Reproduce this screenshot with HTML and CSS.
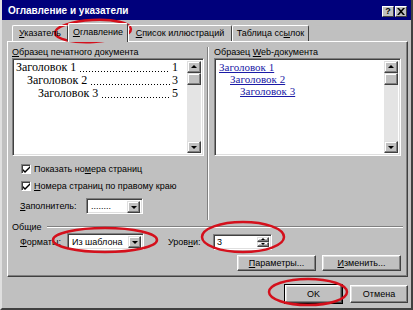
FILE: index.html
```html
<!DOCTYPE html>
<html>
<head>
    <meta charset="UTF-8">
    <title>Оглавление и указатели</title>
    <link rel="stylesheet" href="styles.css">
</head>
<body>

<div class="dialog">
    <div class="titlebar">
        <span class="title">Оглавление и указатели</span>
        <div class="title-buttons">
            <span class="tbtn">?</span>
            <span class="tbtn">
                <svg width="8" height="7" viewBox="0 0 8 7"><path d="M0 0h2l2 2.3L6 0h2L5 3.5 8 7H6L4 4.7 2 7H0l3-3.5z" fill="#000"/></svg>
            </span>
        </div>
    </div>

    <div class="tabs">
        <div class="tab tab-index"><u>У</u>казатель</div>
        <div class="tab tab-toc active"><u>О</u>главление</div>
        <div class="tab tab-figures"><u>С</u>писок иллюстраций</div>
        <div class="tab tab-links">Таблица сс<u>ы</u>лок</div>
    </div>

    <div class="panel">
        <div class="previews">
            <div class="col col-print">
                <div class="label"><u>О</u>бразец печатного документа</div>
                <div class="preview">
                    <div class="preview-body">
                        <div class="toc-line lvl1"><span class="name">Заголовок 1</span><span class="dots"></span><span class="num">1</span></div>
                        <div class="toc-line lvl2"><span class="name">Заголовок 2</span><span class="dots"></span><span class="num">3</span></div>
                        <div class="toc-line lvl3"><span class="name">Заголовок 3</span><span class="dots"></span><span class="num">5</span></div>
                    </div>
                    <div class="scrollbar">
                        <span class="sbtn up"></span>
                        <span class="thumb"></span>
                        <span class="track"></span>
                        <span class="sbtn down"></span>
                    </div>
                </div>
                <div class="check">
                    <span class="box"><svg width="7" height="7" viewBox="0 0 7 7"><path d="M0 3l2 2 5-5v2L2 7 0 5z" fill="#000"/></svg></span>
                    <span>Показать но<u>м</u>ера страниц</span>
                </div>
                <div class="check">
                    <span class="box"><svg width="7" height="7" viewBox="0 0 7 7"><path d="M0 3l2 2 5-5v2L2 7 0 5z" fill="#000"/></svg></span>
                    <span><u>Н</u>омера страниц по правому краю</span>
                </div>
                <div class="field-row filler-row">
                    <span class="field-label filler-label"><u>З</u>аполнитель:</span>
                    <div class="combo filler">
                        <span class="combo-value">........</span>
                        <span class="combo-btn"></span>
                    </div>
                </div>
            </div>

            <div class="vsep"></div>

            <div class="col col-web">
                <div class="label">Образец <u>W</u>eb-документа</div>
                <div class="preview">
                    <div class="preview-body">
                        <div class="web-line lvl1"><a href="javascript:;">Заголовок 1</a></div>
                        <div class="web-line lvl2"><a href="javascript:;">Заголовок 2</a></div>
                        <div class="web-line lvl3"><a href="javascript:;">Заголовок 3</a></div>
                    </div>
                    <div class="scrollbar">
                        <span class="sbtn up"></span>
                        <span class="thumb"></span>
                        <span class="track"></span>
                        <span class="sbtn down"></span>
                    </div>
                </div>
            </div>
        </div>

        <div class="group">
            <div class="group-title"><span>Общие</span><span class="groove"></span></div>
            <div class="field-row format-row">
                <span class="field-label format-label"><u>Ф</u>орматы:</span>
                <div class="combo format">
                    <span class="combo-value">Из шаблона</span>
                    <span class="combo-btn"></span>
                </div>
                <span class="field-label levels-label">Уров<u>н</u>и:</span>
                <div class="spin">
                    <span class="spin-value">3</span>
                    <span class="spin-btns">
                        <span class="sbtn up"></span>
                        <span class="sbtn down"></span>
                    </span>
                </div>
            </div>
            <div class="button-row">
                <a href="javascript:;" class="btn wide"><u>П</u>араметры...</a>
                <a href="javascript:;" class="btn wide"><u>И</u>зменить...</a>
            </div>
        </div>
    </div>

    <div class="footer">
        <a href="javascript:;" class="btn default">OK</a>
        <a href="javascript:;" class="btn">Отмена</a>
    </div>

    <svg class="marks" width="413" height="310" viewBox="0 0 413 310">
        <ellipse cx="93" cy="31" rx="38" ry="11" transform="rotate(-3 93 31)"/>
        <ellipse cx="105" cy="240" rx="52" ry="12"/>
        <ellipse cx="243" cy="237" rx="41" ry="15"/>
        <ellipse cx="308" cy="292" rx="39" ry="13"/>
    </svg>
</div>

</body>
</html>
```

FILE: styles.css
```css
* {
    margin: 0;
    padding: 0;
    box-sizing: border-box;
}
body {
    width: 413px;
    height: 310px;
    overflow: hidden;
    font-family: "Liberation Sans", Arial, sans-serif;
    font-size: 9px;
    color: #000;
    background: #c0c0c0;
}
u {
    text-decoration: underline;
}
a {
    color: #000;
    text-decoration: none;
}

/* окно */
.dialog {
    position: relative;
    width: 413px;
    height: 310px;
    display: flex;
    flex-direction: column;
    background: #c0c0c0;
    border-left: 2px solid #dfdfdf;
    border-right: 2px solid #404040;
    border-bottom: 2px solid #404040;
}
.titlebar {
    height: 20px;
    display: flex;
    align-items: center;
    justify-content: space-between;
    padding: 0 4px 0 6px;
    background: #00007b;
    color: #fff;
}
.title {
    font-weight: bold;
    font-size: 10px;
}
.title-buttons {
    display: flex;
    gap: 1px;
    margin-top: 2px;
}
.tbtn {
    width: 12px;
    height: 11px;
    display: flex;
    align-items: center;
    justify-content: center;
    background: #c0c0c0;
    color: #000;
    font-weight: bold;
    font-size: 9px;
    line-height: 1;
    border: 1px solid;
    border-color: #fff #404040 #404040 #fff;
}

/* вкладки */
.tabs {
    display: flex;
    height: 19px;
    margin-top: 3px;
    padding-left: 10px;
    position: relative;
    z-index: 2;
}
.tab {
    height: 16px;
    margin-top: 2px;
    line-height: 15px;
    text-align: center;
    border: 1px solid;
    border-bottom: none;
    border-color: #fff #404040 #404040 #fff;
    border-radius: 2px 2px 0 0;
    white-space: nowrap;
}
.tab-index {
    width: 56px;
}
.tab-toc {
    width: 60px;
}
.tab-figures {
    width: 104px;
}
.tab-links {
    width: 77px;
}
.tab.active {
    height: 19px;
    margin-top: 0;
    line-height: 17px;
    background: #c0c0c0;
}

/* панель */
.panel {
    height: 236px;
    margin: -1px 3px 0 5px;
    display: flex;
    flex-direction: column;
    border: 1px solid;
    border-color: #fff #404040 #404040 #fff;
    box-shadow: inset -1px -1px #808080;
    padding: 4px 4px 0 4px;
}
.previews {
    display: flex;
    height: 174px;
}
.col {
    display: flex;
    flex-direction: column;
}
.col-print {
    width: 192px;
}
.col-web {
    width: 187px;
}
.vsep {
    width: 2px;
    margin: 1px 5px 0 3px;
    height: 173px;
    border-left: 1px solid #808080;
    border-right: 1px solid #fff;
}
.label {
    height: 12px;
    line-height: 12px;
    white-space: nowrap;
}
.preview {
    height: 98px;
    display: flex;
    background: #fff;
    border: 1px solid;
    border-color: #808080 #fff #fff #808080;
    box-shadow: inset 1px 1px #404040, inset -1px -1px #dfdfdf;
    padding: 2px;
}
.preview-body {
    flex: 1;
    min-width: 0;
    overflow: hidden;
    padding: 0 9px 0 1px;
    font-family: "Liberation Serif", "Times New Roman", serif;
    font-size: 12px;
}
.toc-line {
    display: flex;
    height: 13px;
    line-height: 13px;
    white-space: nowrap;
}
.toc-line .name,
.toc-line .num {
    flex-shrink: 0;
}
/* отточие рисуем фоном из точек */
.toc-line .dots {
    flex: 1 1 0;
    min-width: 0;
    height: 13px;
    margin: 0 2px 0 4px;
    background: linear-gradient(90deg, #000 1px, transparent 1px) 0 10px / 3px 1px repeat-x;
}
.lvl2 {
    padding-left: 11px;
}
.lvl3 {
    padding-left: 22px;
}
.web-line {
    height: 12px;
    line-height: 12px;
    font-size: 11px;
    padding-left: 1px;
}
.web-line.lvl2 {
    padding-left: 12px;
}
.web-line.lvl3 {
    padding-left: 22px;
}
.web-line a {
    color: #1a1aa6;
    text-decoration: underline;
}

/* полоса прокрутки */
.scrollbar {
    width: 14px;
    flex-shrink: 0;
    display: flex;
    flex-direction: column;
    background: #e4e4e4;
}
.sbtn {
    display: block;
    width: 14px;
    height: 12px;
    position: relative;
    background: #c0c0c0;
    border: 1px solid;
    border-color: #dfdfdf #404040 #404040 #dfdfdf;
    box-shadow: inset -1px -1px #808080, inset 1px 1px #fff;
}
.sbtn::after {
    content: "";
    position: absolute;
    left: 50%;
    top: 50%;
    margin-left: -3px;
    border-left: 3px solid transparent;
    border-right: 3px solid transparent;
}
.sbtn.up::after {
    margin-top: -2px;
    border-bottom: 3px solid #000;
}
.sbtn.down::after {
    margin-top: -1px;
    border-top: 3px solid #000;
}
.thumb {
    display: block;
    height: 12px;
    background: #c0c0c0;
    border: 1px solid;
    border-color: #dfdfdf #404040 #404040 #dfdfdf;
    box-shadow: inset -1px -1px #808080, inset 1px 1px #fff;
}
.track {
    flex: 1;
}

/* флажки */
.check {
    display: flex;
    align-items: center;
    gap: 3px;
    height: 12px;
    margin-top: 7px;
    padding-left: 9px;
    white-space: nowrap;
}
.check + .check {
    margin-top: 5px;
}
.box {
    width: 10px;
    height: 10px;
    display: flex;
    align-items: center;
    justify-content: center;
    background: #fff;
    border: 1px solid;
    border-color: #808080 #fff #fff #808080;
    box-shadow: inset 1px 1px #404040;
}
.box svg {
    margin: 1px 0 0 1px;
}

/* поля */
.field-row {
    display: flex;
    align-items: center;
}
.field-label {
    white-space: nowrap;
}
.filler-row {
    margin-top: 5px;
    padding-left: 8px;
    height: 17px;
}
.filler-label {
    width: 66px;
}
.combo {
    display: flex;
    height: 16px;
    background: #fff;
    border: 1px solid;
    border-color: #808080 #fff #fff #808080;
    box-shadow: inset 1px 1px #404040, inset -1px -1px #dfdfdf;
    padding: 2px;
}
.combo-value {
    flex: 1;
    padding-left: 2px;
    line-height: 11px;
    white-space: nowrap;
}
.combo-btn {
    width: 13px;
    height: 12px;
    position: relative;
    background: #c0c0c0;
    border: 1px solid;
    border-color: #dfdfdf #404040 #404040 #dfdfdf;
    box-shadow: inset -1px -1px #808080, inset 1px 1px #fff;
}
.combo-btn::after {
    content: "";
    position: absolute;
    left: 3px;
    top: 4px;
    border-left: 3px solid transparent;
    border-right: 3px solid transparent;
    border-top: 3px solid #000;
}
.filler {
    width: 57px;
}

/* группа "Общие" */
.group {
    display: flex;
    flex-direction: column;
}
.group-title {
    display: flex;
    align-items: center;
    height: 11px;
    margin-top: 1px;
}
.groove {
    flex: 1;
    height: 2px;
    margin-left: 5px;
    border-top: 1px solid #808080;
    border-bottom: 1px solid #fff;
}
.format-row {
    height: 17px;
    margin-top: 1px;
    padding-left: 8px;
}
.format-label {
    width: 47px;
}
.format {
    width: 77px;
    height: 17px;
}
.format .combo-value {
    line-height: 12px;
}
.levels-label {
    width: 45px;
    margin-left: 24px;
}
.spin {
    width: 59px;
    height: 16px;
    display: flex;
    background: #fff;
    border: 1px solid;
    border-color: #808080 #fff #fff #808080;
    box-shadow: inset 1px 1px #404040, inset -1px -1px #dfdfdf;
    padding: 2px;
}
.spin-value {
    flex: 1;
    padding-left: 1px;
    line-height: 11px;
}
.spin-btns {
    display: flex;
    flex-direction: column;
}
.spin-btns .sbtn {
    width: 12px;
    height: 6px;
}
.spin-btns .sbtn::after {
    margin-left: -2px;
    border-left-width: 2px;
    border-right-width: 2px;
}
.spin-btns .sbtn.up::after {
    margin-top: -1px;
    border-bottom-width: 2px;
}
.spin-btns .sbtn.down::after {
    margin-top: -1px;
    border-top-width: 2px;
}
.button-row {
    display: flex;
    justify-content: flex-end;
    gap: 6px;
    margin-top: 5px;
    padding-right: 2px;
}

/* кнопки */
.btn {
    display: flex;
    align-items: center;
    justify-content: center;
    height: 16px;
    width: 58px;
    background: #c0c0c0;
    border: 1px solid;
    border-color: #fff #404040 #404040 #fff;
    box-shadow: inset -1px -1px #808080, inset 1px 1px #dfdfdf;
    white-space: nowrap;
}
.btn.wide {
    width: 79px;
}
.btn.default {
    width: 57px;
    outline: 1px solid #000;
}
.footer {
    display: flex;
    justify-content: flex-end;
    gap: 8px;
    margin-top: 8px;
    padding-right: 3px;
}
.footer .btn {
    height: 18px;
}

/* красные пометки поверх окна */
.marks {
    position: absolute;
    left: -2px;
    top: 0;
    pointer-events: none;
}
.marks ellipse {
    fill: none;
    stroke: #d4101c;
    stroke-width: 2.5;
}
```
